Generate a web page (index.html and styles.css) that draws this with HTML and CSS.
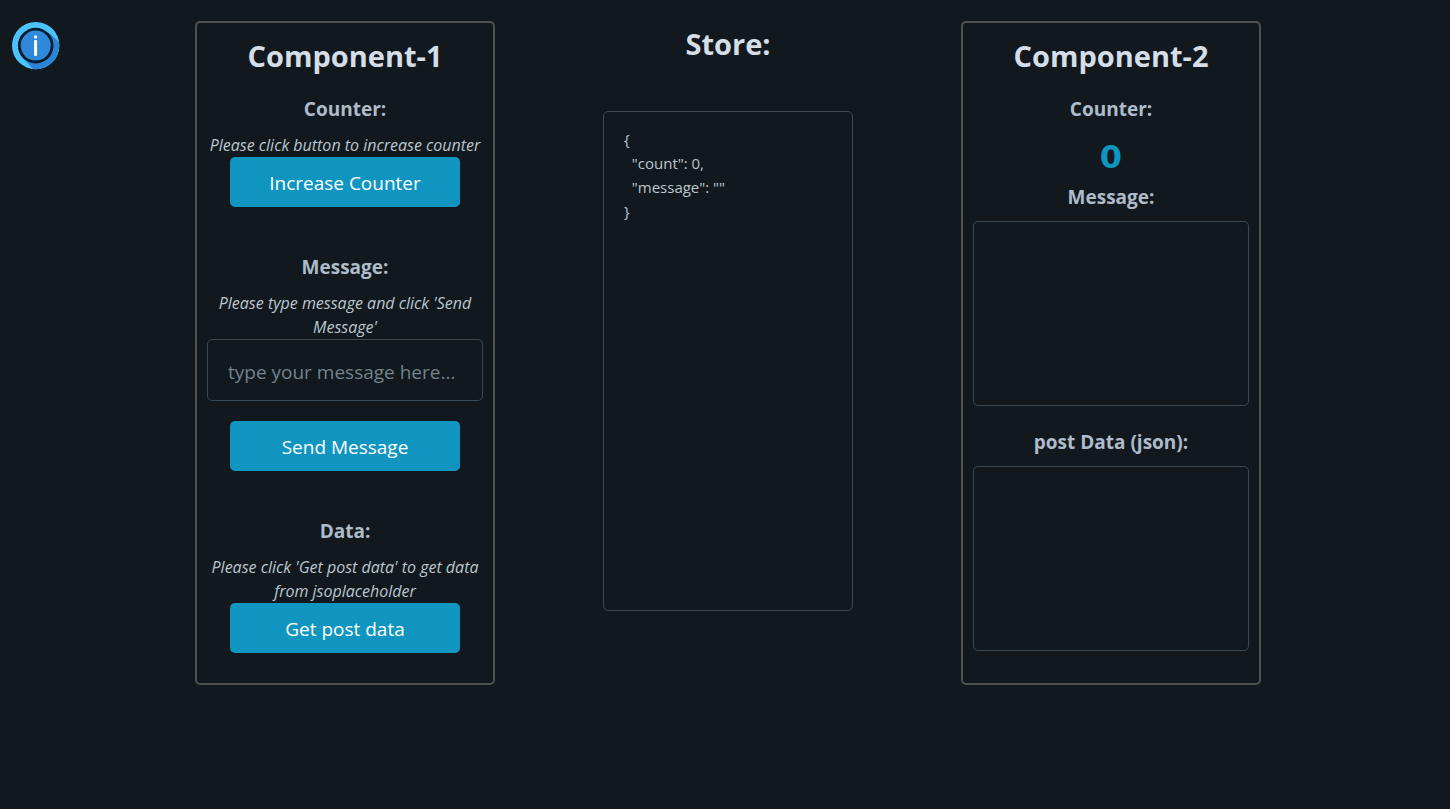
FILE: index.html
```html
<!DOCTYPE html>
<html lang="en">
<head>
<meta charset="utf-8">
<meta name="viewport" content="width=device-width, initial-scale=1">
<title>Store demo</title>
<link rel="stylesheet" href="styles.css">
</head>
<body>
<div class="page">
  <button class="info" type="button" aria-label="Information">
    <svg class="info-icon" viewBox="0 0 48 48" aria-hidden="true">
      <circle cx="23.700" cy="24.600" r="23.700" fill="#4cc2fb"/>
      <path d="M37 12 L46.900 20.800 A23.700 23.700 0 0 1 21 48.100 L12 38 Z" fill="#2c84d6"/>
      <circle cx="23.700" cy="24.600" r="17.800" fill="#071a2c"/>
      <circle cx="23.700" cy="24.600" r="15" fill="#2f88da"/>
      <circle cx="23.600" cy="15.900" r="1.700" fill="#fff"/>
      <rect x="22.100" y="19" width="3" height="16" rx="1.200" fill="#fff"/>
    </svg>
  </button>
  <main class="columns">
    <section class="panel">
      <h2 class="title">Component-1</h2>
      <div class="group">
        <h3 class="label">Counter:</h3>
        <p class="hint">Please click button to increase counter</p>
        <button class="button" type="button">Increase Counter</button>
      </div>
      <form class="group">
        <h3 class="label"><label for="message">Message:</label></h3>
        <p class="hint">Please type message and click 'Send Message'</p>
        <input class="field" id="message" type="text" placeholder="type your message here...">
        <button class="button" type="button">Send Message</button>
      </form>
      <div class="group">
        <h3 class="label">Data:</h3>
        <p class="hint">Please click 'Get post data' to get data from jsoplaceholder</p>
        <button class="button" type="button">Get post data</button>
      </div>
    </section>
    <section class="store">
      <h2 class="title">Store:</h2>
      <pre class="state">{
  "count": 0,
  "message": ""
}</pre>
    </section>
    <section class="panel">
      <h2 class="title">Component-2</h2>
      <h3 class="label">Counter:</h3>
      <output class="count">0</output>
      <h3 class="label">Message:</h3>
      <div class="result"></div>
      <h3 class="label">post Data (json):</h3>
      <div class="result"></div>
    </section>
  </main>
</div>
</body>
</html>
```

FILE: styles.css
```css
* {
  box-sizing: border-box;
}

body {
  margin: 0;
  min-height: 100vh;
  background: #11191f;
  color: #bbc6ce;
  font: 15px/24px "Open Sans", "Noto Sans", sans-serif;
}

h2, h3, p, pre {
  margin: 0;
}

.page {
  display: grid;
  grid-template-columns: 48px 1fr;
  align-items: start;
  padding: 21px 54px 24px 12px;
}

.info {
  padding: 0;
  border: 0;
  background: none;
  cursor: pointer;
}

.info-icon {
  display: block;
  width: 48px;
  height: 48px;
  overflow: visible;
}

.columns {
  display: flex;
  justify-content: center;
  align-items: stretch;
  gap: 108px;
}

.panel {
  display: flex;
  flex-direction: column;
  width: 300px;
  padding: 15px 10px 30px;
  border: 2px solid #4f5150;
  border-radius: 5px;
  text-align: center;
}

.title {
  margin-bottom: 23px;
  color: #d5dde6;
  font-size: 29px;
  line-height: 36px;
  font-weight: 700;
  text-align: center;
}

.label {
  margin-bottom: 12px;
  color: #afbbc9;
  font-size: 19px;
  line-height: 24px;
  font-weight: 700;
}

.group {
  display: flex;
  flex-direction: column;
  align-items: center;
}

.group + .group {
  margin-top: 48px;
}

.hint {
  font-size: 16px;
  font-style: italic;
}

.button {
  width: 230px;
  height: 50px;
  padding: 2px 0 0;
  border: 0;
  border-radius: 5px;
  background: #1095c1;
  color: #fff;
  font: inherit;
  font-size: 19px;
  cursor: pointer;
}

.field {
  width: 100%;
  height: 62px;
  margin-bottom: 20px;
  padding: 4px 20px 0;
  border: 1px solid #374956;
  border-radius: 5px;
  background: #11191f;
  color: #bbc6ce;
  font: inherit;
  font-size: 19px;
}

.field::placeholder {
  color: #73828c;
  opacity: 1;
}

.store {
  width: 250px;
  padding-top: 5px;
}

.store .title {
  margin-bottom: 49px;
}

.state {
  min-height: 500px;
  padding: 15px 20px;
  border: 1px solid #41474c;
  border-radius: 5px;
  font: inherit;
}

.count {
  margin-bottom: 4px;
  color: #1095c1;
  font-family: "DejaVu Sans", sans-serif;
  font-size: 32px;
  line-height: 48px;
  font-weight: 700;
}

.result {
  min-height: 185px;
  border: 1px solid #374956;
  border-radius: 5px;
}

.result + .label {
  margin-top: 24px;
}
```
